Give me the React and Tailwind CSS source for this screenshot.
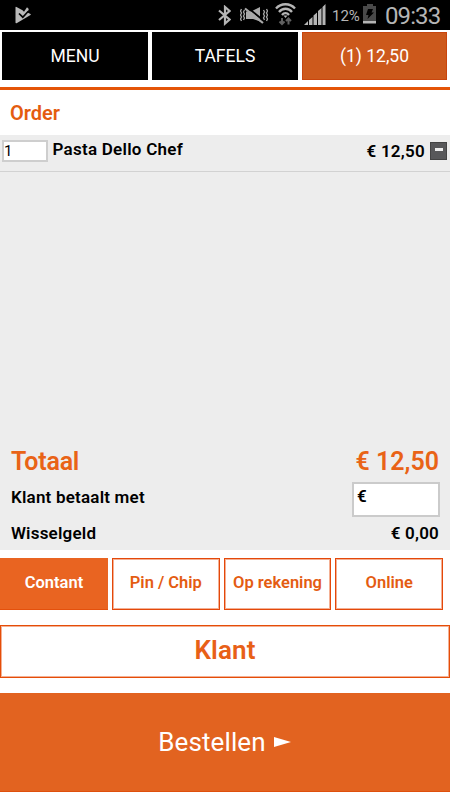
import React from 'react';

function StatusBar() {
  return (
    <header className="flex h-[30px] shrink-0 items-start bg-black text-[#b5b5b5]">
      <svg className="ml-[15px] mt-[6px] h-[18px] w-[17px]" viewBox="0 0 17 18">
        <path d="M.5 1.500Q.5.500 1.500 1L7.500 4.200 9 5.700 12 1.300 13.800 3 12.500 6.500 15.500 8Q16.200 8.500 15.500 9L2 17Q.5 17.800.5 16.500z" fill="#b9b9b9" />
        <path d="M4 7.500l3.800 3.700 5.500-6" fill="none" stroke="#000" strokeWidth="1.700" />
      </svg>
      <svg className="ml-[186px] mt-[5px] h-[21px] w-[13px]" viewBox="0 0 13 21" fill="none" stroke="#b5b5b5" strokeWidth="2.200">
        <path d="M1 5.500l10.500 9L7 18.500V2l4.500 4L1 15" />
      </svg>
      <svg className="ml-[9px] mt-[6px] h-[20px] w-[28px]" viewBox="0 0 28 20" fill="none" stroke="#a9a9a9">
        <path d="M6 5.500h5l9-4.500v14.500L13 13H6z" fill="#a9a9a9" stroke="none" />
        <path d="M6.500 .5l17.500 14.500" stroke="#000" strokeWidth="1.800" />
        <path d="M5 2.500l18 14.500" strokeWidth="2.200" />
        <path d="M1.500 3l-1 2 1 2-1 2 1 2-1 2 1 2M4.500 4l-1 2 1 2-1 2 1 2-1 2M23.500 4l1 2-1 2 1 2-1 2 1 2M26.500 3l1 2-1 2 1 2-1 2 1 2-1 2" strokeWidth="1.300" />
      </svg>
      <svg className="ml-[7px] mt-[2px] h-[24px] w-[21px]" viewBox="0 0 21 24" fill="none" stroke="#b5b5b5" strokeWidth="2.300">
        <path d="M1 6.500C6 .8 15 .8 20 6.500M4 10c3.500-4.300 9.500-4.300 13 0M7 13c2-2.500 5-2.500 7 0" />
        <path d="M8.500 13.500h4l-2 2.500z" fill="#b5b5b5" stroke="none" />
        <path d="M7 16v6M4.500 19.500L7 22l2.500-2.500M13.500 22.500v-6M11 19l2.500-2.500L16 19" stroke="#606060" strokeWidth="2" />
      </svg>
      <svg className="ml-[8px] mt-[4px] h-[21px] w-[22px]" viewBox="0 0 22 21" fill="#b5b5b5">
        <path d="M0 21l4-4v4zM5 16l3.500-3v8H5zM9.500 11.500l3.500-3V21H9.500zM14 7l3.500-3v17H14zM18.500 3l3-3v21h-3z" />
      </svg>
      <span className="ml-[6px] mt-[6px] w-[28px] whitespace-nowrap text-[15px] leading-5">12%</span>
      <svg className="ml-[3px] mt-[4px] h-[20px] w-[14px]" viewBox="0 0 14 20">
        <path d="M4 0h6v2h3v17H0V2h4z" fill="#494949" />
        <path d="M0 17h13v2.500H0z" fill="#b5b5b5" />
        <path d="M5 5h5L8.500 8.500H11L4.500 15l1-4H3z" fill="#000" />
      </svg>
      <span className="ml-[8px] mt-[2px] whitespace-nowrap text-[24px] leading-7 tracking-[-0.9px]">09:33</span>
    </header>
  );
}

const tabs = ['Pin / Chip', 'Op rekening', 'Online'];

export default function App() {
  return (
    <div className="flex h-[800px] w-[450px] flex-col overflow-hidden bg-white font-[Roboto,'Liberation_Sans',sans-serif] text-black">
      <StatusBar />
      <nav className="flex h-[60px] shrink-0 gap-1 border-b-[3px] border-[#e45407] px-0.5 pt-0.5 text-[17.500px] text-white">
        <button className="h-[48px] w-[146px] bg-black pt-px">MENU</button>
        <button className="h-[48px] w-[146px] bg-black pt-px">TAFELS</button>
        <button className="h-[48px] w-[145px] border border-[#c9450d] bg-[#cd591c] pt-px">(1) 12,50</button>
      </nav>
      <h1 className="h-[45px] shrink-0 pl-[10px] pt-px text-[20px] font-semibold leading-[44px] text-[#e45c10]">Order</h1>
      <main className="flex h-[415px] shrink-0 flex-col bg-[#ededed] font-semibold">
        <div className="flex h-[37px] shrink-0 border-b border-[#d2d2d2] text-[17px] tracking-[0.25px]">
          <div className="ml-[2px] mt-[5px] h-[22px] w-[46px] border-2 border-[#cecece] bg-white text-[15px] font-normal leading-[18px]">1</div>
          <span className="ml-[4.500px] mt-[4px] leading-5">Pasta Dello Chef</span>
          <span className="ml-auto mt-[6px] leading-5">€ 12,50</span>
          <button className="ml-[5px] mr-[3px] mt-[7px] flex h-[18px] w-[17px] justify-center border border-[#444] bg-[#58585a] pt-[5px]">
            <span className="h-[3px] w-[8px] bg-[#eeeeee]" />
          </button>
        </div>
        <div className="mt-auto flex h-[40px] items-center justify-between px-[11px] text-[25px] text-[#e96316]">
          <span className="tracking-[-0.2px]">Totaal</span>
          <span>€ 12,50</span>
        </div>
        <div className="flex h-[35px] items-center justify-between pl-[11px] pr-[10px] text-[17px] tracking-[0.2px]">
          <span className="pb-[3px]">Klant betaalt met</span>
          <div className="h-[35px] w-[88px] border-2 border-[#cbcbcb] bg-white pl-[3px] leading-6">€</div>
        </div>
        <div className="flex h-[33px] items-center justify-between px-[11px] text-[17px] tracking-[0.2px]">
          <span>Wisselgeld</span>
          <span>€ 0,00</span>
        </div>
      </main>
      <section className="mt-[8px] flex h-[52px] shrink-0 gap-1 text-[16.500px] font-semibold text-[#e45c12]">
        <button className="w-[108px] border-b border-[#e4500c] bg-[#e96421] pb-px text-white">Contant</button>
        {tabs.map((tab) => (
          <button key={tab} className="w-[107.700px] whitespace-nowrap border border-[#e4480a] pb-px shadow-[inset_0_0_0_1px_#f4b094]">{tab}</button>
        ))}
      </section>
      <button className="mt-[15px] h-[53px] shrink-0 border border-[#e54d08] pb-[2px] text-[26px] font-semibold tracking-[0.15px] text-[#e86017] shadow-[inset_0_0_0_1px_#f4b094]">Klant</button>
      <button className="mt-[15px] flex h-[99px] shrink-0 items-center justify-center border-b border-[#df500c] bg-[#e26320] text-[26px] text-white">
        <span className="tracking-[0.1px]">Bestellen</span>
        <svg className="mr-px ml-[8px] h-[10px] w-[17px]" viewBox="0 0 17 10"><path d="M0 0l17 5-17 5z" fill="white" /></svg>
      </button>
    </div>
  );
}
